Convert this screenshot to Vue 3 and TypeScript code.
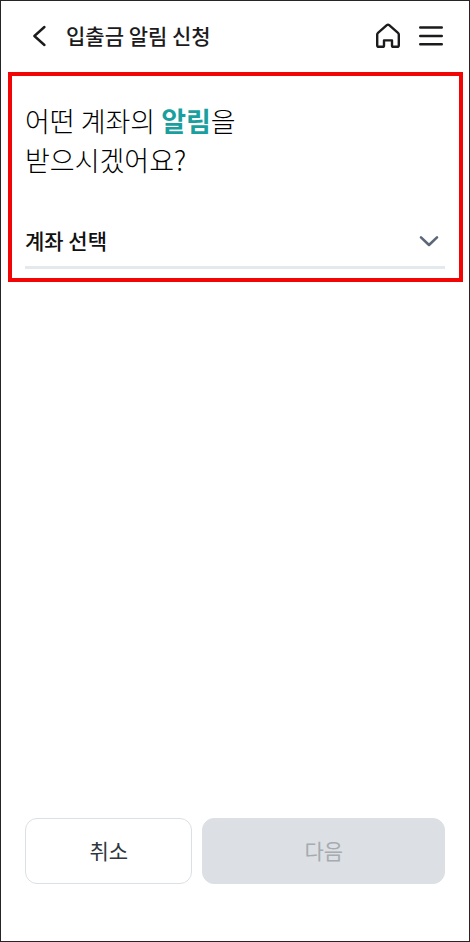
<script setup lang="ts">
import { ref } from 'vue'

const account = ref<string>('')
</script>

<template>
  <div class="screen">
    <header class="header">
      <button class="icon-button back" type="button" aria-label="이전">
        <svg width="14" height="22" viewBox="0 0 14 22" fill="none">
          <path d="M12.4 2 2.4 11l10 9" stroke="#1b1b1d" stroke-width="2.4" stroke-linecap="round" stroke-linejoin="round" />
        </svg>
      </button>
      <h1 class="title">입출금 알림 신청</h1>
      <button class="icon-button" type="button" aria-label="홈">
        <svg width="26" height="26" viewBox="0 0 26 26" fill="none">
          <path
            d="M11.8 2.2 3 9.8Q2.2 10.5 2.2 11.6V22.2Q2.2 23.8 3.8 23.8H7.6Q9 23.8 9 22.4V17.4H17V22.4Q17 23.8 18.4 23.8H22.2Q23.8 23.8 23.8 22.2V11.6Q23.8 10.5 23 9.8L14.2 2.2Q13 1.2 11.8 2.2Z"
            stroke="#1b1b1d"
            stroke-width="2.4"
            stroke-linejoin="round"
          />
        </svg>
      </button>
      <button class="icon-button" type="button" aria-label="메뉴">
        <svg width="24" height="22" viewBox="0 0 24 22" fill="none">
          <path d="M1.2 2.5h21.6M1.2 11h21.6M1.2 19.3h21.6" stroke="#1b1b1d" stroke-width="2.4" stroke-linecap="round" />
        </svg>
      </button>
    </header>

    <main class="panel">
      <h2 class="question">어떤 계좌의 <strong>알림</strong>을<br />받으시겠어요?</h2>
      <div class="field">
        <select v-model="account" class="select" aria-label="계좌 선택">
          <option value="">계좌 선택</option>
        </select>
        <svg class="chevron" width="20" height="12" viewBox="0 0 20 12" fill="none" aria-hidden="true">
          <path d="M2 2.4l8 7.6L18 2.4" stroke="#5b6778" stroke-width="2.6" stroke-linecap="round" stroke-linejoin="round" />
        </svg>
      </div>
    </main>

    <footer class="actions">
      <button class="action cancel" type="button">취소</button>
      <button class="action next" type="button" :disabled="account === ''">다음</button>
    </footer>
  </div>
</template>

<style>
body {
  background: #fff;
}
</style>

<style scoped>
.screen {
  box-sizing: border-box;
  display: flex;
  flex-direction: column;
  min-height: 100vh;
  border: 1px solid #252427;
  background: #fff;
  color: #1b1b1d;
  font-family: "Noto Sans CJK KR", sans-serif;
}

.header {
  box-sizing: border-box;
  display: flex;
  align-items: center;
  gap: 18px;
  height: 71px;
  padding: 0 26px 2px 31px;
}

.icon-button {
  display: flex;
  padding: 0;
  border: 0;
  background: none;
  cursor: pointer;
}

.title {
  flex: 1;
  margin: 0;
  padding: 0 0 2px 2px;
  font-size: 21px;
  font-weight: 500;
  line-height: 30px;
}

.panel {
  margin: 0 6px 0 7px;
  padding: 25px 14px 9px 13px;
  border: 4px solid #f20505;
}

.question {
  margin: 0;
  color: #000;
  font-size: 27px;
  font-weight: 300;
  line-height: 39px;
}

.question strong {
  color: #1a9f9f;
  font-weight: 700;
}

.field {
  display: flex;
  align-items: center;
  margin-top: 37px;
  border-bottom: 3px solid #e4e9ee;
}

.select {
  flex: 1;
  height: 50px;
  padding: 0 0 2px;
  border: 0;
  appearance: none;
  background: none;
  color: #111;
  font-family: inherit;
  font-size: 21px;
  font-weight: 500;
}

.chevron {
  margin-left: -26px;
  margin-right: 6px;
  pointer-events: none;
}

.actions {
  display: flex;
  gap: 10px;
  margin-top: auto;
  padding: 0 24px 57px;
}

.action {
  box-sizing: border-box;
  height: 66px;
  padding: 0 0 2px;
  border: 1px solid #dce0e3;
  border-radius: 12px;
  font-family: inherit;
  font-size: 21px;
}

.cancel {
  flex: 11;
  background: #fff;
  color: #30373e;
  font-weight: 400;
}

.next {
  flex: 16;
  background: #dce0e4;
  color: #a6abb1;
  font-weight: 400;
}
</style>
